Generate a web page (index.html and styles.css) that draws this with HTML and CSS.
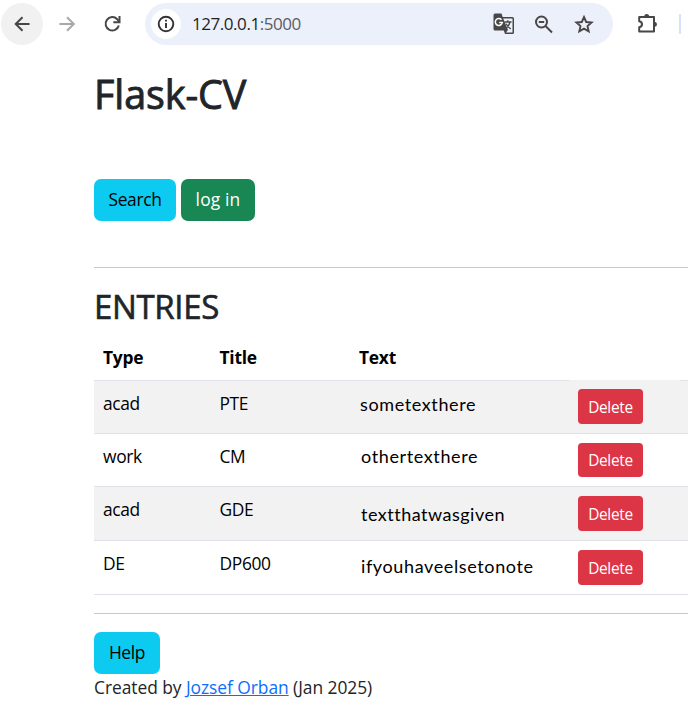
FILE: index.html
```html
<!DOCTYPE html>
<html lang="en">
<head>
<meta charset="utf-8">
<title>Flask-CV</title>
<link rel="stylesheet" href="styles.css">
</head>
<body>
<header class="toolbar">
  <span class="nav-btn nav-btn-active"><svg width="18" height="18" viewBox="0 0 18 18" fill="none" stroke="#474747" stroke-width="2"><path d="M16.500 9H3M9.500 2.200L2.700 9L9.500 15.800"/></svg></span>
  <span class="nav-btn"><svg width="18" height="18" viewBox="0 0 18 18" fill="none" stroke="#a8a8a8" stroke-width="2"><path d="M1.5 9H15.5M9 2.2L15.8 9L9 15.8"/></svg></span>
  <span class="nav-btn"><svg width="18" height="18" viewBox="0 0 18 18" fill="none" stroke="#474747" stroke-width="2"><path d="M15.8 10.5A6.7 6.7 0 1 1 14.200 4.2L16 6.5"/><path d="M16.500 1V7.3H10.300"/></svg></span>
  <div class="address">
    <span class="info"><svg width="18" height="18" viewBox="0 0 18 18" fill="none" stroke="#333" stroke-width="1.9"><circle cx="9" cy="9" r="7.3"/><path d="M9 8V13M9 4.8V6.6"/></svg></span>
    <span class="url">127.0.0.1<span class="port">:5000</span></span>
    <svg class="tool translate" width="22" height="22" viewBox="0 0 22 22"><path d="M2 .5H8.5L9.7 4H19.5Q21 4 21 5.500V19.500Q21 21 19.500 21H12L10.800 17.500H2Q.5 17.500.5 16V2Q.5.5 2 .5Z" fill="#474747"/><path d="M10.200 5.500H19.500V19.500H13L15 17Z" fill="#edf1fa"/><path d="M8.500 6.700A3.500 3.500 0 1 0 9.300 9.500H6.200" fill="none" stroke="#fff" stroke-width="1.500"/><path d="M11.500 9H18.500M14.800 7.200V9M17 9.300Q15.800 13.500 12.800 15.500M13.200 10.800Q14.800 14 17.800 16" fill="none" stroke="#474747" stroke-width="1.300"/></svg>
    <svg class="tool zoom" width="20" height="20" viewBox="0 0 20 20" fill="none" stroke="#474747" stroke-width="2"><circle cx="7.500" cy="8" r="5.500"/><path d="M11.500 12L18 18.500M4.800 8H10.200"/></svg>
    <svg class="tool star" width="20" height="20" viewBox="0 0 20 20" fill="none" stroke="#474747" stroke-width="1.900"><path d="M10 3L12.200 8L17.600 8.500L13.500 12.100L14.700 17.400L10 14.600L5.300 17.400L6.500 12.100L2.400 8.500L7.800 8Z"/></svg>
  </div>
  <svg class="puzzle" width="22" height="22" viewBox="0 0 22 22"><path d="M2.200 4H17V18.500H2.200V14.300Q5 13.800 5 11.300Q5 8.700 2.200 8.300Z" fill="none" stroke="#474747" stroke-width="2" stroke-linejoin="round"/><path d="M7.200 3.500A2.500 2.500 0 0 1 12.200 3.500ZM17.500 8.800A2.500 2.500 0 0 1 17.500 13.800Z" fill="#474747"/></svg>
  <span class="divider"></span>
</header>
<main class="page">
  <h1>Flask-CV</h1>
  <div class="actions"><a class="btn info-btn search">Search</a><a class="btn success-btn">log in</a></div>
  <hr>
  <h2>ENTRIES</h2>
  <table>
    <colgroup><col class="c-type"><col class="c-title"><col class="c-text"><col class="c-action"><col></colgroup>
    <thead><tr><th>Type</th><th>Title</th><th>Text</th><th class="plain"></th><th></th></tr></thead>
    <tbody>
      <tr class="odd"><td>acad</td><td>PTE</td><td class="note n1">sometexthere</td><td class="first"><a class="delete">Delete</a></td><td></td></tr>
      <tr><td>work</td><td>CM</td><td class="note n2">othertexthere</td><td><a class="delete short">Delete</a></td><td></td></tr>
      <tr class="odd tall"><td>acad</td><td>GDE</td><td class="note n3">textthatwasgiven</td><td><a class="delete">Delete</a></td><td></td></tr>
      <tr class="tall"><td>DE</td><td>DP600</td><td class="note n4">ifyouhaveelsetonote</td><td><a class="delete">Delete</a></td><td></td></tr>
    </tbody>
  </table>
  <hr class="bottom">
  <a class="btn info-btn help">Help</a>
  <p class="credit">Created by <a class="link">Jozsef Orban</a> (Jan 2025)</p>
</main>
</body>
</html>
```
FILE: styles.css
```css
* { box-sizing: border-box; }
body {
  margin: 0;
  height: 714px;
  overflow: hidden;
  background: #fff;
  color: #212529;
  font: 17.4px/26px "Open Sans", "Noto Sans", sans-serif;
  letter-spacing: -.35px;
}
.toolbar { display: flex; align-items: center; height: 48px; padding-left: 1px; }
.nav-btn { display: flex; align-items: center; justify-content: center; width: 42px; height: 42px; margin-right: 3px; border-radius: 50%; flex: none; }
.nav-btn-active { background: #f1f1f1; }
.address { display: flex; align-items: center; width: 468px; height: 42px; margin-left: 9px; padding-left: 6px; border-radius: 21px; background: #ecf0fa; flex: none; }
.info { display: flex; align-items: center; justify-content: center; width: 30px; height: 30px; border-radius: 50%; background: #fff; }
.url { width: 311px; margin-left: 11px; color: #1f1f1f; font-size: 17px; letter-spacing: -.45px; white-space: nowrap; }
.port { color: #5a5d63; }
.tool { flex: none; }
.translate { margin-left: -10px; }
.zoom { margin-left: 19px; }
.star { margin-left: 20px; }
.puzzle { margin-left: 24px; flex: none; }
.divider { width: 2px; height: 20px; margin-left: 20px; background: #d3e3fd; flex: none; }
.page { margin-left: 94px; }
h1, h2 { margin: 0; font-weight: 400; }
h1 { height: 131px; padding-top: 22px; font-size: 39.5px; line-height: 48px; letter-spacing: -.1px; -webkit-text-stroke: .9px currentColor; }
.actions { display: flex; gap: 5px; height: 88px; }
.btn { display: flex; align-items: center; justify-content: center; height: 42px; padding-bottom: 2px; border-radius: 7px; text-decoration: none; }
.info-btn { background: #0dcaf0; color: #000; }
.success-btn { width: 74px; background: #198754; color: #fff; letter-spacing: .15px; }
.search { width: 82px; }
.help { width: 66px; }
hr { height: 1px; margin: 0; border: 0; background: #c8c9ca; }
h2 { height: 68px; padding-top: 19px; font-size: 33px; line-height: 40px; letter-spacing: -.35px; -webkit-text-stroke: .6px currentColor; }
table { width: 100%; table-layout: fixed; border-collapse: separate; border-spacing: 0; color: #000; }
.c-type { width: 116.5px; }
.c-title { width: 139.5px; }
.c-text { width: 219px; }
.c-action { width: 111px; }
th { height: 45px; padding: 0 9px 2px; border-bottom: 1px solid #dee2e6; text-align: left; font-weight: 700; letter-spacing: -.25px; vertical-align: middle; }
th.plain { border-bottom-color: #f2f2f2; }
th:last-child, td:last-child { padding: 0; }
td { height: 53px; padding: 9px 0 0 9px; border-bottom: 1px solid #dee2e6; vertical-align: top; }
td.first { padding-top: 8px; }
.tall td { height: 54px; }
.odd td { background: #f2f2f2; }
.tall .note, .note { padding-left: 11px; font-family: Lato, sans-serif; font-size: 18px; letter-spacing: .62px; }
.note.n1 { padding-top: 10px; padding-left: 10px; }
.note.n2 { padding-top: 9px; }
.note.n3 { padding-top: 14px; letter-spacing: .5px; }
.note.n4 { padding-top: 12px; }
.delete { display: flex; align-items: center; justify-content: center; width: 65px; height: 35px; padding-top: 2px; border-radius: 4px; background: #dc3545; color: #fff; font-size: 15.4px; letter-spacing: -.3px; }
.short { height: 34px; }
.bottom { margin: 18px 0; }
.credit { margin: 0; letter-spacing: -.05px; }
.link { color: #0d6efd; text-decoration: underline; }
```
